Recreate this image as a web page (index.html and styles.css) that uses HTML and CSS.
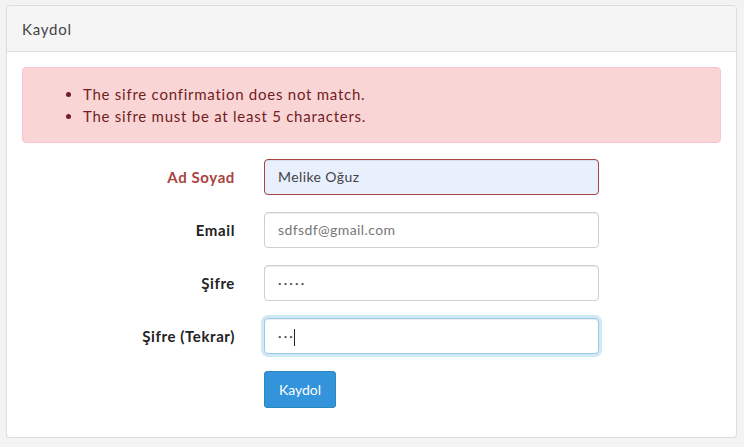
FILE: index.html
```html
<!DOCTYPE html>
<html>
<head>
<meta charset="utf-8">
<link rel="stylesheet" href="styles.css">
</head>
<body>
<div class="panel">
  <div class="panel-heading">Kaydol</div>
  <div class="panel-body">
    <div class="alert">
      <ul>
        <li>The sifre confirmation does not match.</li>
        <li>The sifre must be at least 5 characters.</li>
      </ul>
    </div>
    <form class="form">
      <div class="row has-error">
        <label class="label">Ad Soyad</label>
        <div class="field"><div class="input autofill">Melike Oğuz</div></div>
      </div>
      <div class="row">
        <label class="label">Email</label>
        <div class="field"><div class="input muted">sdfsdf@gmail.com</div></div>
      </div>
      <div class="row">
        <label class="label">Şifre</label>
        <div class="field"><div class="input dots">•••••</div></div>
      </div>
      <div class="row">
        <label class="label">Şifre (Tekrar)</label>
        <div class="field"><div class="input focus dots">•••<span class="caret"></span></div></div>
      </div>
      <div class="row last">
        <div class="label"></div>
        <div class="field"><button type="button" class="btn">Kaydol</button></div>
      </div>
    </form>
  </div>
</div>
</body>
</html>
```
FILE: styles.css
```css
* { box-sizing: border-box; }
html, body { margin: 0; }
body {
  background: #f3f3f3;
  font-family: "Lato", "Open Sans", sans-serif;
  font-size: 14px;
  line-height: 1.6;
  color: #636b6f;
  padding: 5px 8px 0 6px;
}
.panel {
  background: #fff;
  border: 1px solid #dcdcdc;
  border-radius: 4px;
  box-shadow: 0 1px 1px rgba(0,0,0,.05);
  width: 731px;
}
.panel-heading {
  background: #f5f5f5;
  border-bottom: 1px solid #dcdcdc;
  border-radius: 3px 3px 0 0;
  padding: 11px 15px 11px 15px;
  font-size: 15px;
  letter-spacing: 0.8px;
  color: #444;
  height: 46px;
}
.panel-body {
  padding: 15px 15px 14px;
}
.alert {
  background: #f9d6d5;
  border: 1px solid #f5c6cb;
  border-radius: 4px;
  color: #721c24;
  padding: 15px 15px 15px;
  margin-bottom: 16px;
  font-size: 15px;
  letter-spacing: 0.75px;
  line-height: 22px;
}
.alert ul { margin: 0; padding-left: 45px; }
.alert li { padding-left: 0; }
.form { margin: 0 -15px; }
.row {
  display: flex;
  margin-bottom: 17px;
}
.row.last { margin-bottom: 15px; }
.label {
  width: 33.3333%;
  padding: 7px 15px 0;
  text-align: right;
  font-weight: 700;
  color: #222;
  font-size: 15px;
  letter-spacing: 0.6px;
  line-height: 22px;
}
.has-error .label { color: #a94442; }
.field {
  width: 50%;
  padding: 0 15px 0 14px;
}
.input {
  height: 36px;
  padding: 7px 13px;
  border: 1px solid #ccd0d2;
  border-radius: 4px;
  box-shadow: inset 0 1px 1px rgba(0,0,0,.075);
  font-size: 14px;
  letter-spacing: 0.4px;
  line-height: 20px;
  color: #555;
  background: #fff;
}
.input.autofill {
  background: #e8f0fe;
  border-color: #a94442;
  color: #444;
}
.input.muted { color: #777; }
.input.dots { font-size: 6px; letter-spacing: 2.2px; color: #555; padding-top: 8px; }
.input.focus {
  border-color: #98cbe8;
  box-shadow: inset 0 1px 1px rgba(0,0,0,.075), 0 0 0 3px rgba(152,203,232,.45);
}
.caret {
  display: inline-block;
  width: 1px;
  height: 17px;
  background: #222;
  vertical-align: middle;
  margin-left: -1px;
}
.btn {
  font-family: inherit;
  font-size: 14px;
  line-height: 22px;
  padding: 7px 14px;
  width: 72px;
  height: 37px;
  background: #3393db;
  border: 1px solid #2a88bd;
  border-radius: 3px;
  color: #fff;
}
```
